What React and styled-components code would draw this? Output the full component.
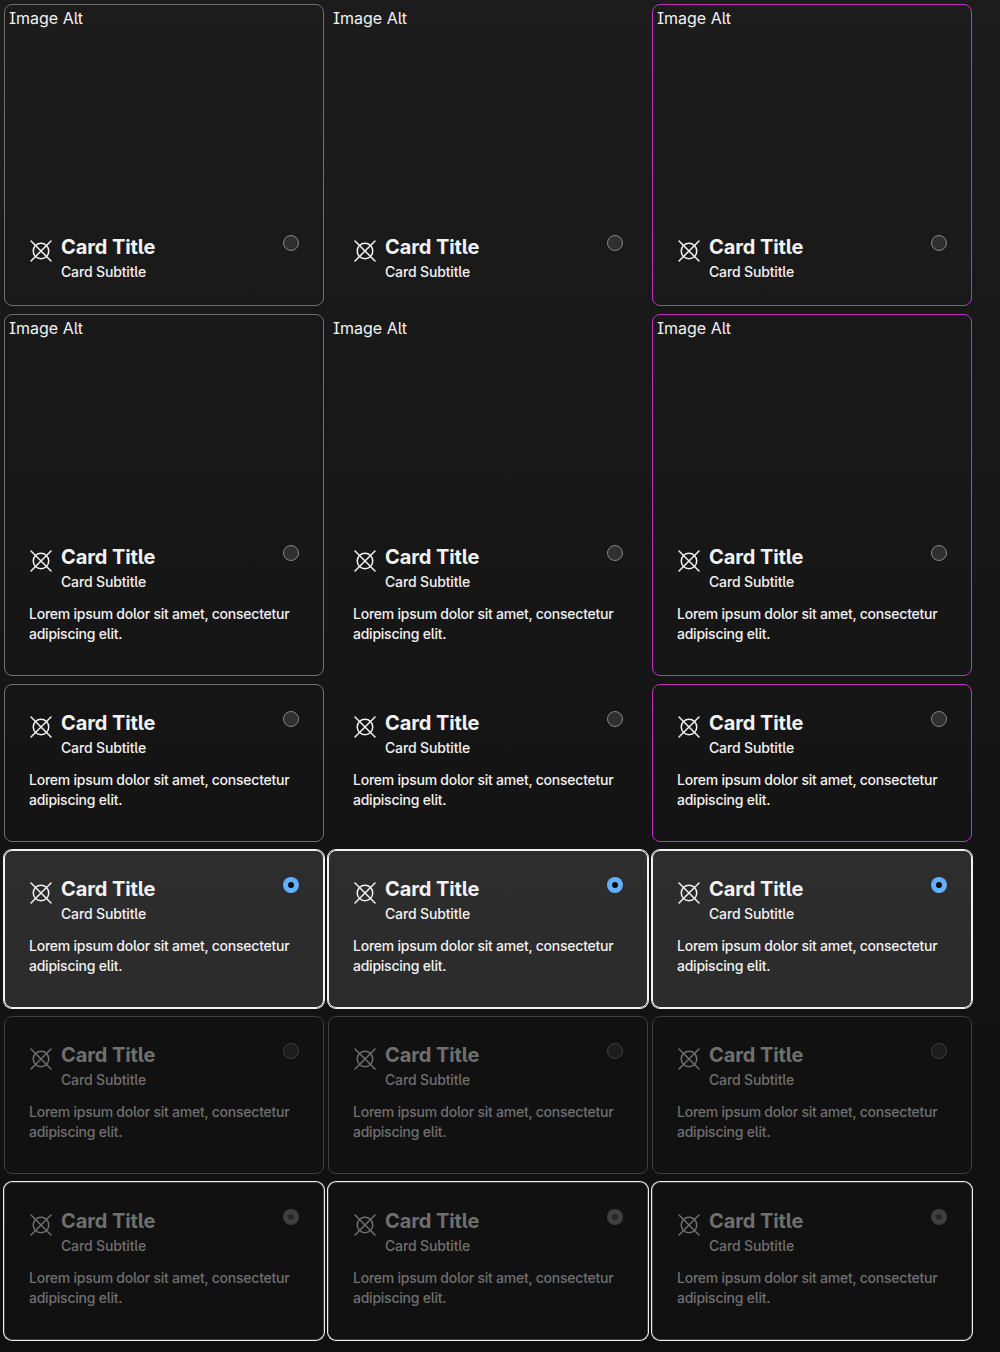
import React from "react";
import styled, { createGlobalStyle, css } from "styled-components";

const GlobalStyle = createGlobalStyle`
  *, *::before, *::after { box-sizing: border-box; }
  html { background: #0f0f0f; }
  body {
    margin: 0;
    font-family: Inter, "Liberation Sans", sans-serif;
    font-feature-settings: "ss02";
    color: #f2f2f2;
  }
`;

const Page = styled.main`
  min-height: 1352px;
  padding: 4px;
  background: linear-gradient(#1c1c1c, #0f0f0f);
`;

const Grid = styled.div`
  display: grid;
  grid-template-columns: repeat(3, 320px);
  gap: 8px 4px;
`;

const outlines = {
  neutral: "#6f6f6f",
  plain: "transparent",
  accent: "#be32be",
};

const Card = styled.label`
  display: flex;
  flex-direction: column;
  height: ${(p) => p.$height}px;
  border: 1px solid ${(p) => outlines[p.$outline]};
  border-radius: 8px;
  color: #f2f2f2;
  ${(p) =>
    p.$selected &&
    css`
      background: rgba(255, 255, 255, 0.11);
      border-color: #f2f2f2;
      box-shadow: 0 0 0 1px #f2f2f2;
    `}
  ${(p) =>
    p.$disabled &&
    css`
      background: #111111;
      border-color: #3f3f3f;
      color: #6f6f6f;
      box-shadow: ${p.$selected ? "0 0 0 1px #f2f2f2" : "none"};
    `}
`;

const Media = styled.div`
  flex: none;
  height: 204px;
  padding: 3px 4px 0;
  font-size: 16px;
  line-height: 20px;
`;

const Body = styled.div`
  display: flex;
  flex-direction: column;
  gap: 12px;
  padding: 24px;
`;

const Header = styled.div`
  display: flex;
  gap: 8px;
`;

const Icon = styled.svg`
  flex: none;
  width: 24px;
  height: 24px;
  margin-top: 6px;
  fill: none;
  stroke: currentColor;
  stroke-width: 1.5;
  stroke-linecap: round;
`;

const Heading = styled.div`
  flex: 1;
`;

const Title = styled.div`
  font-size: 20px;
  font-weight: 700;
  line-height: 28px;
  letter-spacing: -0.1px;
`;

const Subtitle = styled.div`
  margin-top: 1px;
  font-size: 14px;
  font-weight: 500;
  line-height: 20px;
  letter-spacing: -0.15px;
`;

const Description = styled.p`
  margin: 0;
  font-size: 14px;
  font-weight: 500;
  line-height: 20px;
  letter-spacing: -0.24px;
`;

const Radio = styled.span`
  display: flex;
  align-items: center;
  justify-content: center;
  flex: none;
  width: 16px;
  height: 16px;
  margin-top: 2px;
  border-radius: 50%;
  border: 1px solid ${(p) => (p.$disabled ? "#3f3f3f" : "#858585")};
  background: ${(p) => (p.$disabled ? "#1c1c1c" : "#303030")};
  ${(p) =>
    p.$selected &&
    css`
      border: 0;
      background: ${p.$disabled ? "#3f3f3f" : "#62b0ff"};
    `}
`;

const Dot = styled.span`
  width: 6px;
  height: 6px;
  border-radius: 50%;
  background: ${(p) => (p.$disabled ? "#262626" : "#0b0b0b")};
`;

function SelectableCard({ outline, media, description, selected, disabled, height }) {
  return (
    <Card $outline={outline} $selected={selected} $disabled={disabled} $height={height}>
      {media && <Media>Image Alt</Media>}
      <Body>
        <Header>
          <Icon viewBox="0 0 24 24" aria-hidden="true">
            <circle cx="12" cy="12" r="7.75" />
            <path d="M2 2 22 22M22 2 2 22" />
          </Icon>
          <Heading>
            <Title>Card Title</Title>
            <Subtitle>Card Subtitle</Subtitle>
          </Heading>
          <Radio $selected={selected} $disabled={disabled}>
            {selected && <Dot $disabled={disabled} />}
          </Radio>
        </Header>
        {description && (
          <Description>Lorem ipsum dolor sit amet, consectetur adipiscing elit.</Description>
        )}
      </Body>
    </Card>
  );
}

const rows = [
  { media: true, height: 302 },
  { media: true, description: true, height: 362 },
  { description: true, height: 158 },
  { description: true, selected: true, height: 158 },
  { description: true, disabled: true, height: 158 },
  { description: true, selected: true, disabled: true, height: 158 },
];

export default function App() {
  return (
    <>
      <GlobalStyle />
      <Page>
        <Grid>
          {rows.flatMap((row, index) =>
            Object.keys(outlines).map((outline) => (
              <SelectableCard key={`${index}-${outline}`} outline={outline} {...row} />
            ))
          )}
        </Grid>
      </Page>
    </>
  );
}
